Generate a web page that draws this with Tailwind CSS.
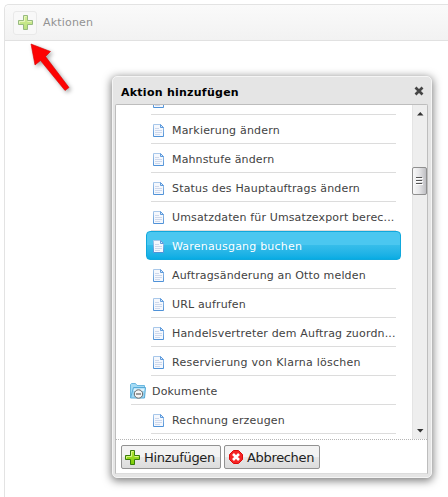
<!DOCTYPE html>
<html lang="de">
<head>
<meta charset="utf-8">
<title>Aktionen</title>
<script src="https://cdn.jsdelivr.net/npm/@tailwindcss/browser@4"></script>
</head>
<body class="relative h-[497px] w-[448px] overflow-hidden bg-white font-['DejaVu_Sans',Verdana,sans-serif] text-[11px] text-[#424242]">
<svg class="absolute h-0 w-0">
  <linearGradient id="green" x2="0" y2="1"><stop stop-color="#b5e933"/><stop offset="1" stop-color="#79cb08"/></linearGradient>
  <linearGradient id="edge" x2="0" y2="1"><stop stop-color="#a9c8ea"/><stop offset="1" stop-color="#4f92d8"/></linearGradient>
  <symbol id="page" viewBox="0 0 11 13"><path d="M.5.5H7.5L10.500 3.500V12.500H.5Z" fill="#f5f8fd" stroke="url(#edge)"/><path d="M7.500.5V3.500H10.500Z" fill="#d9e9fa" stroke="#5f9bdc"/><path d="M2 4.500H6M2 6.500H9M2 8.500H9M2 10.500H7" stroke="#cdd8ec"/></symbol>
  <symbol id="plus" viewBox="0 0 15 15"><path d="M5.500.5H9.500V5.500H14.500V9.500H9.500V14.500H5.500V9.500H.5V5.500H5.500Z" fill="url(#green)" stroke="#397d0b"/><path d="M6.500 6.500V1.500H8.500M1.500 8.500V6.500H6.500M9.500 6.500H13.500" fill="none" stroke="#d8f58a"/></symbol>
</svg>

<main class="ml-1 mt-1 h-[493px] rounded-tl-[5px] border-l border-t border-[#e3e3e3]">
  <header class="flex h-9 items-center rounded-tl-[5px] border-b border-[#e1e1e1] bg-linear-to-b from-[#fafafa] to-[#f2f2f2] pl-2">
    <span class="flex h-6 w-6 items-center justify-center rounded-[3px] border border-[#e9e9e9] bg-[#f8f8f8]"><svg class="h-[15px] w-[15px] opacity-50"><use href="#plus"/></svg></span>
    <span class="ml-[6px] pt-[2px] tracking-[.18px] text-[#929292]">Aktionen</span>
  </header>
</main>

<svg class="absolute left-[24px] top-[38px] h-[62px] w-[56px] drop-shadow-[2px_2px_2px_rgba(0,0,0,0.35)]" viewBox="24 38 56 62"><path d="M31 44L50.500 51.500L45.500 56.500L69 87.500L65 90.500L40.500 60.500L35 65Z" fill="#fc0303" stroke="#d80000" stroke-width=".6"/></svg>

<section class="absolute left-[112px] top-[76px] flex h-[402px] w-[320px] flex-col rounded-[5px] border border-[#f5f5f5] bg-[#e5e5e5] pb-[3px] pl-[2px] pr-[3px] shadow-[0_2px_8px_1px_rgba(0,0,0,0.5)]">
  <div class="flex h-[27px] shrink-0 items-center justify-between pl-[6px] pr-[4px] pt-[2px]">
    <h1 class="pt-[3px] font-bold tracking-[.26px] text-black">Aktion hinzufügen</h1>
    <svg class="mb-[1px] h-[10px] w-[10px]" viewBox="0 0 10 10"><path d="M1.500 1.500L8.500 8.500M8.500 1.500L1.500 8.500" stroke="#454545" stroke-width="2.700"/></svg>
  </div>
  <div class="flex min-h-0 flex-1 flex-col rounded-t-[2px] border border-[#bdbdbd] border-b-[#dcdcdc] bg-white">
    <div class="flex h-[334px] shrink-0">
      <ul class="w-[296px] overflow-hidden pl-[15px] pr-[16px]">
        <li class="ml-5 flex h-[10px] items-end overflow-hidden border-b border-[#dcdcdc] pb-[6px] pl-[2px]"><svg class="h-[13px] w-[11px] shrink-0"><use href="#page"/></svg></li>
        <li class="ml-5 flex h-[29px] items-center border-b border-[#dcdcdc] pl-[2px] pt-[2px]"><svg class="mr-[8px] h-[13px] w-[11px] shrink-0"><use href="#page"/></svg><span class="pt-[2px] tracking-[.19px]">Markierung ändern</span></li>
        <li class="ml-5 flex h-[29px] items-center border-b border-[#dcdcdc] pl-[2px] pt-[2px]"><svg class="mr-[8px] h-[13px] w-[11px] shrink-0"><use href="#page"/></svg><span class="pt-[2px] tracking-[.14px]">Mahnstufe ändern</span></li>
        <li class="ml-5 flex h-[29px] items-center border-b border-[#dcdcdc] pl-[2px] pt-[2px]"><svg class="mr-[8px] h-[13px] w-[11px] shrink-0"><use href="#page"/></svg><span class="pt-[2px] tracking-[.17px]">Status des Hauptauftrags ändern</span></li>
        <li class="ml-5 flex h-[29px] items-center border-b border-[#dcdcdc] pl-[2px] pt-[2px]"><svg class="mr-[8px] h-[13px] w-[11px] shrink-0"><use href="#page"/></svg><span class="whitespace-nowrap pt-[2px] tracking-[.14px]">Umsatzdaten für Umsatzexport berec...</span></li>
        <li class="-mr-[5px] ml-[15px] flex h-[29px] items-center rounded-[4px] border border-[#0fa8dd] bg-linear-to-b from-[#4bc7f0] from-50% via-[#35bdea] via-50% to-[#06ace3] pl-[6px] pt-[2px] text-white"><svg class="mr-[8px] h-[13px] w-[11px] shrink-0"><use href="#page"/></svg><span class="pt-[2px] tracking-[.2px]">Warenausgang buchen</span></li>
        <li class="ml-5 flex h-[29px] items-center border-b border-[#dcdcdc] pl-[2px] pt-[2px]"><svg class="mr-[8px] h-[13px] w-[11px] shrink-0"><use href="#page"/></svg><span class="pt-[2px] tracking-[.16px]">Auftragsänderung an Otto melden</span></li>
        <li class="ml-5 flex h-[29px] items-center border-b border-[#dcdcdc] pl-[2px] pt-[2px]"><svg class="mr-[8px] h-[13px] w-[11px] shrink-0"><use href="#page"/></svg><span class="pt-[2px] tracking-[.16px]">URL aufrufen</span></li>
        <li class="ml-5 flex h-[29px] items-center border-b border-[#dcdcdc] pl-[2px] pt-[2px]"><svg class="mr-[8px] h-[13px] w-[11px] shrink-0"><use href="#page"/></svg><span class="whitespace-nowrap pt-[2px] tracking-[.17px]">Handelsvertreter dem Auftrag zuordn...</span></li>
        <li class="ml-5 flex h-[29px] items-center border-b border-[#dcdcdc] pl-[2px] pt-[2px]"><svg class="mr-[8px] h-[13px] w-[11px] shrink-0"><use href="#page"/></svg><span class="pt-[2px] tracking-[.26px]">Reservierung von Klarna löschen</span></li>
        <li class="flex h-[29px] items-center border-b border-[#dcdcdc] pt-[2px]"><svg class="-ml-px mr-[6px] h-4 w-4 shrink-0" viewBox="0 0 16 16"><path d="M.5 14.500V1.500L1.500.5H5.500L7 2.500H14.500V14.500Z" fill="#a5dbf5" stroke="#6bb8e0"/><path d="M3.500 4.500H15.500L14.500 15H.5Z" fill="#9ed7f3" stroke="#58abd8"/><path d="M4 5.500H14.500L14 8H3.500Z" fill="#d9f2fd"/><circle cx="8.500" cy="11" r="4.200" fill="#f4f4f4" stroke="#686868"/><path d="M6 11H11" stroke="#444"/></svg><span class="pt-[2px] tracking-[.2px]">Dokumente</span></li>
        <li class="ml-5 flex h-[29px] items-center border-b border-[#dcdcdc] pl-[2px] pt-[2px]"><svg class="mr-[8px] h-[13px] w-[11px] shrink-0"><use href="#page"/></svg><span class="pt-[2px] tracking-[.18px]">Rechnung erzeugen</span></li>
      </ul>
      <svg class="h-[334px] w-[15px]" viewBox="0 0 15 334">
        <linearGradient id="thumb"><stop stop-color="#fafafa"/><stop offset=".45" stop-color="#e7e7e9"/><stop offset="1" stop-color="#bcbcc0"/></linearGradient>
        <path d="M0 0H15V334H0Z" fill="#eeeeee"/><path d="M.5 0V334" stroke="#e4e4e4"/>
        <path d="M5 10.500L8.300 7L11.500 10.500Z" fill="#333"/><path d="M5 324L8.300 327.500L11.500 324Z" fill="#333"/>
        <rect x=".5" y="62.500" width="14" height="27" rx="1.500" fill="url(#thumb)" stroke="#8f8f8f"/>
        <path d="M4 72.500H10M4 75.500H10M4 78.500H10" stroke="#555"/><path d="M4 73.500H11M4 76.500H11M4 79.500H11" stroke="#fff"/>
      </svg>
    </div>
    <div class="flex flex-1 gap-[3px] border-t border-dotted border-[#b5b5b5] pl-[5px] pt-[5px] text-[13px] text-[#222]">
      <button class="flex h-6 w-[100px] items-center rounded-[2px] border border-[#929292] bg-linear-to-b from-[#f3f3f3] from-50% via-[#e7e7e7] via-50% to-[#dcdcdc] pl-[3px]"><svg class="mr-[4px] h-[15px] w-[15px] shrink-0"><use href="#plus"/></svg><span class="pt-px tracking-[-.3px]">Hinzufügen</span></button>
      <button class="flex h-6 w-[96px] items-center rounded-[2px] border border-[#929292] bg-linear-to-b from-[#f3f3f3] from-50% via-[#e7e7e7] via-50% to-[#dcdcdc] pl-[4px]"><svg class="mr-[4px] h-[14px] w-[14px] shrink-0" viewBox="0 0 14 14"><path d="M4.500.5H9.500L13.500 4.500V9.500L9.500 13.500H4.500L.5 9.500V4.500Z" fill="#f52424" stroke="#dc0b0b"/><path d="M4 4L10 10M10 4L4 10" stroke="#fff" stroke-width="2.600"/></svg><span class="pt-px tracking-[-.33px]">Abbrechen</span></button>
    </div>
  </div>
</section>
</body>
</html>
